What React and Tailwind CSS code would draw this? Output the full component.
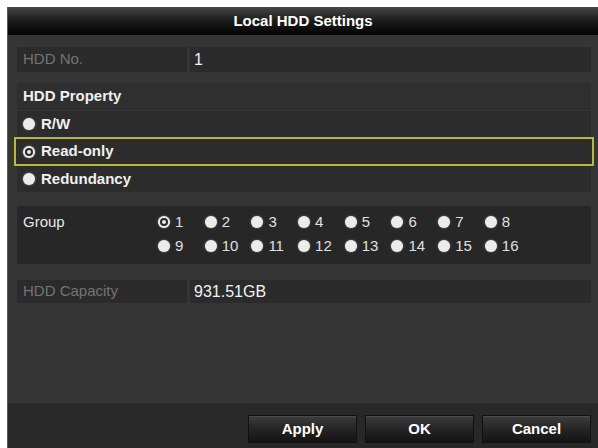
import React from "react";

const font = "font-['Liberation_Sans',Arial,sans-serif]";

function Radio({ checked }) {
  return (
    <span className="w-[12px] h-[12px] rounded-full bg-[#ececec] shadow-[0_0_2px_rgba(255,255,255,0.5)] flex items-center justify-center shrink-0">
      {checked && (
        <span className="w-[8px] h-[8px] rounded-full bg-[#2a2a2a] flex items-center justify-center">
          <span className="w-[4px] h-[4px] rounded-full bg-[#ececec]" />
        </span>
      )}
    </span>
  );
}

function FieldRow({ label, value, className = "" }) {
  return (
    <div className={`flex gap-[3px] ${className}`}>
      <div className="w-[170px] h-full bg-[#2b2b2b] flex items-center pl-[6px] text-[15px] text-[#737373]">
        {label}
      </div>
      <div className="flex-1 h-full bg-[#2b2b2b] flex items-center pl-[4px] text-[16px] text-[#f2f2f2]">
        {value}
      </div>
    </div>
  );
}

const properties = ["R/W", "Read-only", "Redundancy"];

export default function App() {
  const groups = Array.from({ length: 16 }, (_, i) => i + 1);

  return (
    <div className={`w-[598px] h-[448px] bg-white pt-[7px] pl-[7px] overflow-hidden ${font}`}>
      <div className="w-[591px] h-[441px] bg-[#353535] border-l border-[#5c5c5c] flex flex-col">
        {/* title */}
        <div className="h-[28px] shrink-0 bg-gradient-to-b from-[#474747] via-[#1b1b1b] to-[#050505] flex items-center justify-center text-white font-bold text-[15px]">
          Local HDD Settings
        </div>

        {/* body */}
        <div className="flex-1 flex flex-col pl-[9px] pr-[7px]">
          <FieldRow label="HDD No." value="1" className="mt-[12px] h-[25px]" />

          <div className="mt-[11px] flex flex-col gap-[1px]">
            <div className="h-[27px] bg-[#2f2f2f] flex items-center pl-[6px] text-[15px] font-bold text-[#f0f0f0]">
              HDD Property
            </div>
            {properties.map((p) =>
              p === "Read-only" ? (
                <div
                  key={p}
                  className="h-[29px] -my-[1px] -mx-[3px] border-2 border-[#b8b83a] bg-[#2c2c2c] flex items-center gap-[6px] pl-[7px] text-[15px] font-bold text-[#f0f0f0]"
                >
                  <Radio checked />
                  {p}
                </div>
              ) : (
                <div
                  key={p}
                  className="h-[26px] bg-[#2c2c2c] flex items-center gap-[6px] pl-[6px] text-[15px] font-bold text-[#f0f0f0]"
                >
                  <Radio />
                  {p}
                </div>
              )
            )}
          </div>

          <div className="mt-[14px] h-[58px] bg-[#272727] flex pt-[8px]">
            <div className="w-[141px] pl-[6px] text-[15px] text-[#e6e6e6] leading-[16px]">Group</div>
            <div className="grid grid-cols-[repeat(8,46.7px)] auto-rows-[16px] gap-y-[8px]">
              {groups.map((g) => (
                <div key={g} className="flex items-center gap-[5px] h-[16px] leading-[16px] text-[15px] text-[#e0e0e0]">
                  <Radio checked={g === 1} />
                  {g}
                </div>
              ))}
            </div>
          </div>

          <FieldRow label="HDD Capacity" value="931.51GB" className="mt-[16px] h-[23px]" />
        </div>

        {/* footer */}
        <div className="h-[45px] shrink-0 bg-[#282828] flex items-start justify-end gap-[8px] pt-[12px] pr-[7px]">
          {["Apply", "OK", "Cancel"].map((b) => (
            <button
              key={b}
              className="w-[109px] h-[28px] bg-gradient-to-b from-[#3d3d3d] via-[#252525] to-[#141414] border border-[#111] shadow-[inset_0_1px_0_#4a4a4a] text-white font-bold text-[15px] flex items-center justify-center"
            >
              {b}
            </button>
          ))}
        </div>
      </div>
    </div>
  );
}
